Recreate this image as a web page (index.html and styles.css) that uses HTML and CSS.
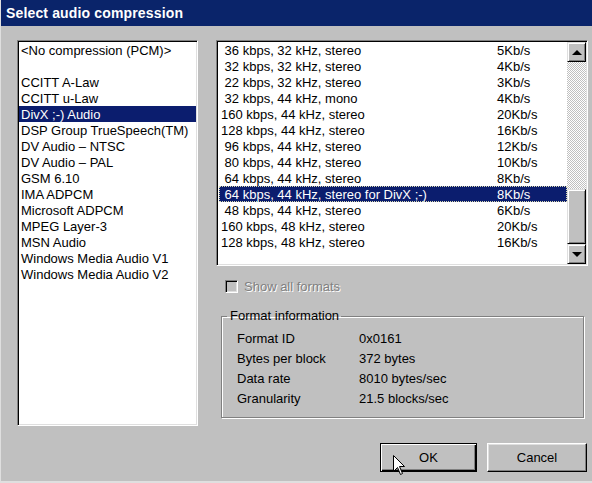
FILE: index.html
```html
<!doctype html>
<html>
	<head>
		<meta charset="utf-8">
		<link rel="stylesheet" href="styles.css">
	</head>
	<body>
		<div class="dialog">
			<div class="titlebar">Select audio compression</div>

			<div class="dialog-body">
				<ul class="listbox codecs">
					<li>&lt;No compression (PCM)&gt;</li>
					<li>&nbsp;</li>
					<li>CCITT A-Law</li>
					<li>CCITT u-Law</li>
					<li class="selected">DivX ;-) Audio</li>
					<li>DSP Group TrueSpeech(TM)</li>
					<li>DV Audio &ndash; NTSC</li>
					<li>DV Audio &ndash; PAL</li>
					<li>GSM 6.10</li>
					<li>IMA ADPCM</li>
					<li>Microsoft ADPCM</li>
					<li>MPEG Layer-3</li>
					<li>MSN Audio</li>
					<li>Windows Media Audio V1</li>
					<li>Windows Media Audio V2</li>
				</ul>

				<div class="right-panel">
					<div class="listbox formats">
						<ul class="format-rows">
							<li><span> 36 kbps, 32 kHz, stereo</span><span>5Kb/s</span></li>
							<li><span> 32 kbps, 32 kHz, stereo</span><span>4Kb/s</span></li>
							<li><span> 22 kbps, 32 kHz, stereo</span><span>3Kb/s</span></li>
							<li><span> 32 kbps, 44 kHz, mono</span><span>4Kb/s</span></li>
							<li><span>160 kbps, 44 kHz, stereo</span><span>20Kb/s</span></li>
							<li><span>128 kbps, 44 kHz, stereo</span><span>16Kb/s</span></li>
							<li><span> 96 kbps, 44 kHz, stereo</span><span>12Kb/s</span></li>
							<li><span> 80 kbps, 44 kHz, stereo</span><span>10Kb/s</span></li>
							<li><span> 64 kbps, 44 kHz, stereo</span><span>8Kb/s</span></li>
							<li class="selected focused"><span> 64 kbps, 44 kHz, stereo for DivX ;-)</span><span>8Kb/s</span></li>
							<li><span> 48 kbps, 44 kHz, stereo</span><span>6Kb/s</span></li>
							<li><span>160 kbps, 48 kHz, stereo</span><span>20Kb/s</span></li>
							<li><span>128 kbps, 48 kHz, stereo</span><span>16Kb/s</span></li>
						</ul>
						<div class="scrollbar">
							<div class="sb-btn"><span class="arrow-up"></span></div>
							<div class="sb-track"></div>
							<div class="sb-thumb"></div>
							<div class="sb-btn"><span class="arrow-down"></span></div>
						</div>
					</div>

					<label class="checkbox disabled">
						<span class="check-box"></span>
						<span class="check-label">Show all formats</span>
					</label>

					<fieldset class="groupbox">
						<legend>Format information</legend>
						<dl class="info">
							<dt>Format ID</dt><dd>0x0161</dd>
							<dt>Bytes per block</dt><dd>372 bytes</dd>
							<dt>Data rate</dt><dd>8010 bytes/sec</dd>
							<dt>Granularity</dt><dd>21.5 blocks/sec</dd>
						</dl>
					</fieldset>
				</div>

				<div class="buttons">
					<button class="btn default">OK</button>
					<button class="btn cancel">Cancel</button>
				</div>
			</div>

			<svg class="cursor" width="13" height="21" viewBox="0 0 13 21">
				<path d="M0.5 0.5 L0.5 16.5 L4.5 12.5 L7.5 19.5 L9.5 18.5 L6.5 11.5 L11.5 11.5 Z" fill="#fff" stroke="#000" stroke-width="1"/>
			</svg>
		</div>
	</body>
</html>
```

FILE: styles.css
```css
* {
	box-sizing: border-box;
}

body {
	margin: 0;
	background: #c0c0c0;
	font-family: "Liberation Sans", Arial, sans-serif;
	font-size: 13px;
	color: #000;
}

.dialog {
	position: relative;
	width: 592px;
	height: 483px;
	background: #c0c0c0;
	border-left: 1px solid #dfdfdf;
	border-bottom: 2px solid #dfdfdf;
	overflow: hidden;
}

.titlebar {
	height: 26px;
	padding: 5px 0 0 5px;
	background: #0a246a;
	color: #fff;
	font-weight: bold;
	font-size: 14px;
	line-height: 16px;
	letter-spacing: 0.15px;
}

.dialog-body {
	display: grid;
	grid-template-columns: 181px 372px;
	column-gap: 18px;
	padding: 14px 0 0 16px;
}

/* sunken white list boxes */
.listbox {
	margin: 0;
	padding: 0;
	list-style: none;
	background: #fff;
	border: 1px solid;
	border-color: #808080 #fff #fff #808080;
	box-shadow: inset 1px 1px #000, inset -1px -1px #dfdfdf;
}

.listbox li {
	height: 16px;
	line-height: 17px;
	white-space: pre;
}

.codecs {
	height: 386px;
	padding: 1px;
	overflow: hidden;
}

.codecs li {
	padding-left: 2px;
}

.selected {
	background: #0b1d6e;
	color: #fff;
}

.right-panel {
	display: flex;
	flex-direction: column;
}

.formats {
	display: flex;
	height: 226px;
	padding: 1px;
}

.format-rows {
	flex: 1;
	margin: 0;
	padding: 0 0 0 1px;
	list-style: none;
}

.format-rows li {
	display: grid;
	grid-template-columns: 276px 1fr;
	padding-left: 2px;
}

.format-rows li.focused {
	outline: 1px dotted #d8d8b0;
	outline-offset: -1px;
}

/* vertical scroll bar */
.scrollbar {
	width: 19px;
	display: flex;
	flex-direction: column;
}

.sb-btn,
.sb-thumb {
	background: #c0c0c0;
	border: 1px solid;
	border-color: #dfdfdf #000 #000 #dfdfdf;
	box-shadow: inset 1px 1px #fff, inset -1px -1px #808080;
}

.sb-btn {
	height: 20px;
	display: flex;
	align-items: center;
	justify-content: center;
}

.sb-track {
	height: 127px;
	background-color: #fff;
	background-image: repeating-conic-gradient(#c0c0c0 0 25%, #fff 0 50%);
	background-size: 2px 2px;
}

.sb-thumb {
	flex: 1;
}

.arrow-up,
.arrow-down {
	width: 0;
	height: 0;
	border-left: 5px solid transparent;
	border-right: 5px solid transparent;
}

.arrow-up {
	border-bottom: 5px solid #000;
}

.arrow-down {
	border-top: 5px solid #000;
}

/* disabled check box */
.checkbox {
	display: flex;
	align-items: center;
	gap: 6px;
	margin: 12px 0 0 9px;
	height: 16px;
}

.check-box {
	width: 13px;
	height: 13px;
	background: #c0c0c0;
	border: 1px solid;
	border-color: #808080 #fff #fff #808080;
	box-shadow: inset 1px 1px #000, inset -1px -1px #dfdfdf;
}

.disabled .check-label {
	color: #808080;
	text-shadow: 1px 1px #fff;
}

/* etched group box */
.groupbox {
	margin: 14px 4px 0 5px;
	padding: 7px 0 0 0;
	height: 110px;
	border: 1px solid #808080;
	box-shadow: 1px 1px #fff, inset 1px 1px #fff;
}

.groupbox legend {
	margin-left: 5px;
	padding: 0 2px 0 3px;
	line-height: 16px;
}

.info {
	display: grid;
	grid-template-columns: 122px 1fr;
	row-gap: 4px;
	margin: 0 0 0 15px;
}

.info dt,
.info dd {
	margin: 0;
	line-height: 16px;
}

/* push buttons */
.buttons {
	grid-column: 1 / -1;
	display: flex;
	justify-content: flex-end;
	gap: 10px;
	margin-top: 17px;
	padding-right: 1px;
}

.btn {
	width: 97px;
	height: 29px;
	padding: 0;
	font: inherit;
	color: #000;
	background: #c0c0c0;
	border: 1px solid;
	border-color: #fff #000 #000 #fff;
	box-shadow: inset -1px -1px #808080, inset 1px 1px #dfdfdf;
}

.btn.cancel {
	width: 100px;
}

.btn.default {
	border: 1px solid #000;
	box-shadow: inset 1px 1px #fff, inset -1px -1px #000, inset -2px -2px #808080;
}

.cursor {
	position: absolute;
	left: 392px;
	top: 455px;
}
```
